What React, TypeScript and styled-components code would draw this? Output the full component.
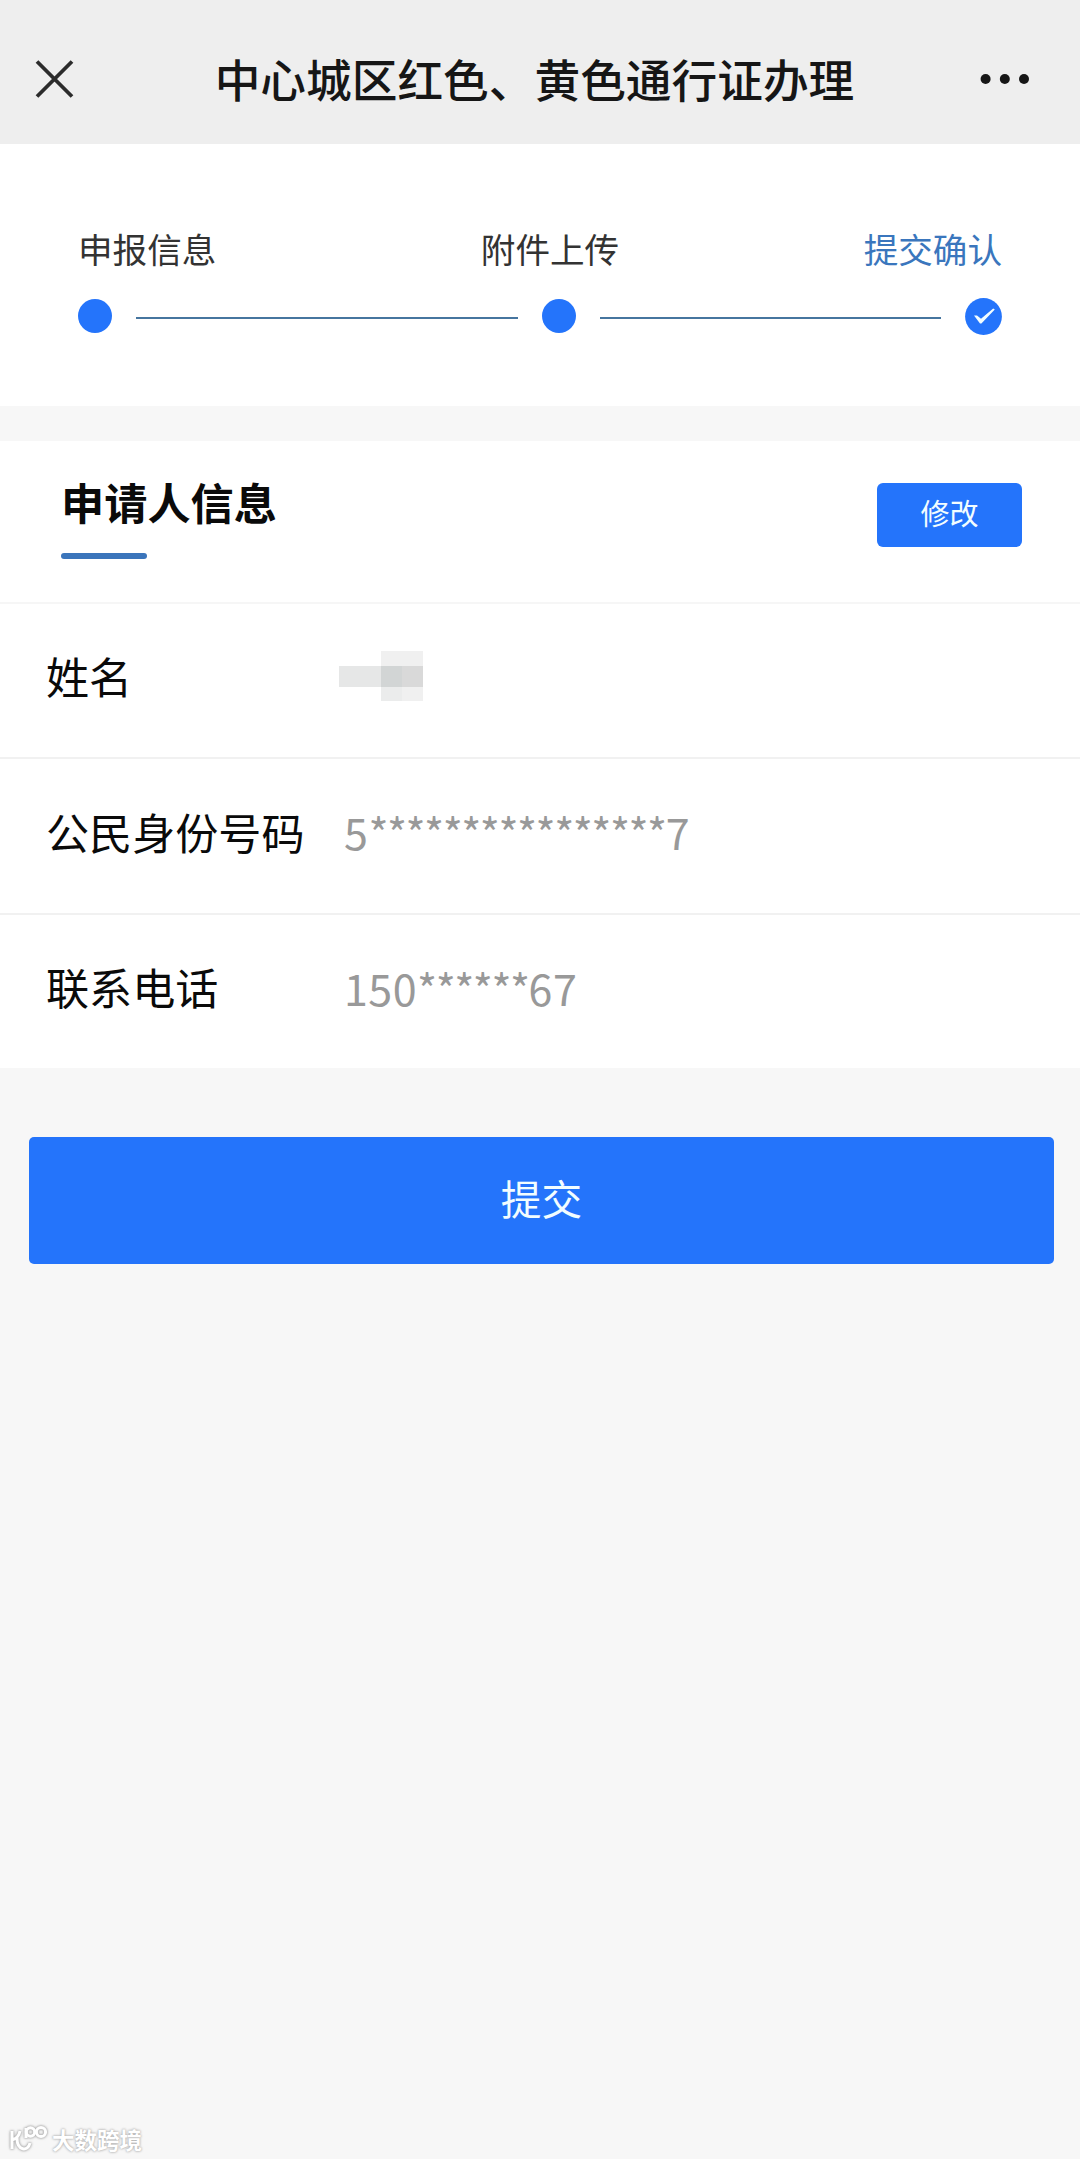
import React from "react";
import styled, { createGlobalStyle } from "styled-components";

const GlobalStyle = createGlobalStyle`
  * { box-sizing: border-box; }
  body {
    margin: 0;
    background: #f7f7f7;
    font-family: "Noto Sans CJK SC", "Noto Sans", sans-serif;
  }
  button { font-family: inherit; border: 0; padding: 0; }
`;

const Page = styled.div`
  display: flex;
  flex-direction: column;
  width: 1080px;
  height: 2159px;
  background: #f7f7f7;
  overflow: hidden;
`;

const NavBar = styled.header`
  display: flex;
  align-items: center;
  justify-content: space-between;
  height: 144px;
  padding: 14px 50px 0 35px;
  background: #eeeeee;
`;

const NavTitle = styled.h1`
  margin: 0 0 3px 15px;
  font-size: 45.7px;
  font-weight: 500;
  line-height: 60px;
  color: #161616;
  white-space: nowrap;
`;

const NavIcon = styled.svg`
  display: block;
  flex: none;
`;

const Steps = styled.section`
  height: 262px;
  padding: 81px 78px 0 78px;
  background: #ffffff;
`;

const StepLabels = styled.div`
  display: flex;
  justify-content: space-between;
`;

const StepLabel = styled.span<{ $active?: boolean; $shift?: number }>`
  margin-left: ${(p) => p.$shift ?? 0}px;
  font-size: 34.6px;
  line-height: 46px;
  color: ${(p) => (p.$active ? "#3a76bd" : "#333333")};
`;

const StepTrack = styled.div`
  display: flex;
  align-items: center;
  height: 38px;
  margin-top: 26px;
`;

const StepDot = styled.span`
  flex: none;
  width: 34px;
  height: 34px;
  border-radius: 50%;
  background: #2474fb;
`;

const StepLine = styled.span`
  flex: 1 1 auto;
  height: 2px;
  margin: 3px 24px 0;
  background: #46759f;
`;

const Card = styled.section`
  margin-top: 35px;
  background: #ffffff;
`;

const CardHeader = styled.div`
  display: flex;
  justify-content: space-between;
  align-items: flex-start;
  height: 163px;
  padding: 30px 58px 0 61px;
  border-bottom: 2px solid #f6f6f6;
`;

const CardTitle = styled.h2`
  margin: 0;
  font-size: 43.2px;
  font-weight: 700;
  line-height: 60px;
  color: #0a0a0a;
  &::after {
    content: "";
    display: block;
    width: 86px;
    height: 6px;
    margin-top: 22px;
    border-radius: 3px;
    background: #3b75bb;
  }
`;

const EditButton = styled.button`
  width: 145px;
  height: 64px;
  margin-top: 12px;
  padding-bottom: 6px;
  border-radius: 6px;
  background: #2474fb;
  color: #f2fdff;
  font-size: 29px;
  line-height: 40px;
`;

const Row = styled.div<{ $height: number }>`
  display: flex;
  align-items: center;
  height: ${(p) => p.$height}px;
  padding: 0 46px 10px;
  border-bottom: 2px solid #f1f1f1;
  &:last-child { border-bottom: 0; }
`;

const RowLabel = styled.span`
  width: 298px;
  margin-bottom: 1px;
  font-size: 43.1px;
  line-height: 60px;
  color: #0a0a0a;
`;

const RowValue = styled.span`
  font-size: 43px;
  line-height: 60px;
  color: #999999;
`;

const Digits = styled.span`
  letter-spacing: 0.5px;
`;

const Stars = styled.span`
  letter-spacing: -1.5px;
`;

const Redaction = styled.div`
  display: grid;
  grid-template-columns: 42px 21px 21px;
  grid-template-rows: 15px 21px 14px;
  margin-left: -5px;
`;

const Tile = styled.i<{ $tone: string }>`
  background: ${(p) => p.$tone};
`;

const SubmitButton = styled.button`
  width: 1025px;
  height: 127px;
  margin: 69px 0 0 29px;
  padding-bottom: 6px;
  border-radius: 5px;
  background: #2474fb;
  color: #f2fdff;
  font-size: 40.7px;
  line-height: 56px;
`;

const Watermark = styled.footer`
  display: flex;
  align-items: center;
  gap: 4px;
  margin: auto 0 5px 9px;
  color: #ffffff;
  font-size: 22.5px;
  font-weight: 700;
  line-height: 30px;
  text-shadow: 0 0 2px #b0b0b0, 0 0 3px #b0b0b0;
`;

const WatermarkLogo = styled.svg`
  display: block;
  overflow: visible;
  filter: drop-shadow(0 0 1px #aaaaaa) drop-shadow(0 0 1px #bbbbbb);
`;

const TILES = [
  "transparent", "#f0f0f0", "#f0f0f0",
  "#e6e7e7", "#d2d5d5", "#d9d9d9",
  "transparent", "#ebecec", "#f0f0f0",
];

const Masked = ({ head, stars, tail }: { head: string; stars: number; tail: string }) => (
  <RowValue>
    <Digits>{head}</Digits>
    <Stars>{"*".repeat(stars)}</Stars>
    <Digits>{tail}</Digits>
  </RowValue>
);

export default function App() {
  return (
    <Page>
      <GlobalStyle />
      <NavBar>
        <NavIcon width="39" height="40" viewBox="0 0 39 40" aria-label="关闭">
          <path d="M2 2.5 37 37.5M37 2.5 2 37.5" stroke="#2b2b2b" strokeWidth="3.8" fill="none" />
        </NavIcon>
        <NavTitle>中心城区红色、黄色通行证办理</NavTitle>
        <NavIcon width="50" height="12" viewBox="0 0 50 12" aria-label="更多">
          <g fill="#161616">
            <circle cx="5.6" cy="6" r="5" />
            <circle cx="24.8" cy="6" r="5" />
            <circle cx="44" cy="6" r="5" />
          </g>
        </NavIcon>
      </NavBar>

      <Steps>
        <StepLabels>
          <StepLabel>申报信息</StepLabel>
          <StepLabel $shift={20}>附件上传</StepLabel>
          <StepLabel $active>提交确认</StepLabel>
        </StepLabels>
        <StepTrack>
          <StepDot />
          <StepLine style={{ flex: "0 0 382px" }} />
          <StepDot />
          <StepLine />
          <NavIcon width="37" height="37" viewBox="0 0 37 37">
            <circle cx="18.5" cy="18.5" r="18.4" fill="#2474fb" />
            <path d="M9 17.6 12 17.4 16 20.8 28.2 10.6 29.8 11.4 16.4 25.4 15 25.4Z" fill="#f2fdff" />
          </NavIcon>
        </StepTrack>
      </Steps>

      <Card>
        <CardHeader>
          <CardTitle>申请人信息</CardTitle>
          <EditButton>修改</EditButton>
        </CardHeader>
        <Row $height={155}>
          <RowLabel>姓名</RowLabel>
          <Redaction>
            {TILES.map((tone, i) => (
              <Tile key={i} $tone={tone} />
            ))}
          </Redaction>
        </Row>
        <Row $height={156}>
          <RowLabel>公民身份号码</RowLabel>
          <Masked head="5" stars={16} tail="7" />
        </Row>
        <Row $height={153}>
          <RowLabel>联系电话</RowLabel>
          <Masked head="150" stars={6} tail="67" />
        </Row>
      </Card>

      <SubmitButton>提交</SubmitButton>

      <Watermark>
        <WatermarkLogo width="39" height="28" viewBox="0 0 39 28" fill="none" stroke="#ffffff" strokeWidth="3">
          <path d="M3 6V24M11 6C10 11 7 14 3 15M8 13C8 26 19 27 21 18" />
          <path d="M17 13V3" />
          <circle cx="21.5" cy="7" r="4.2" />
          <circle cx="32" cy="7" r="4.6" />
        </WatermarkLogo>
        <span>大数跨境</span>
      </Watermark>
    </Page>
  );
}
